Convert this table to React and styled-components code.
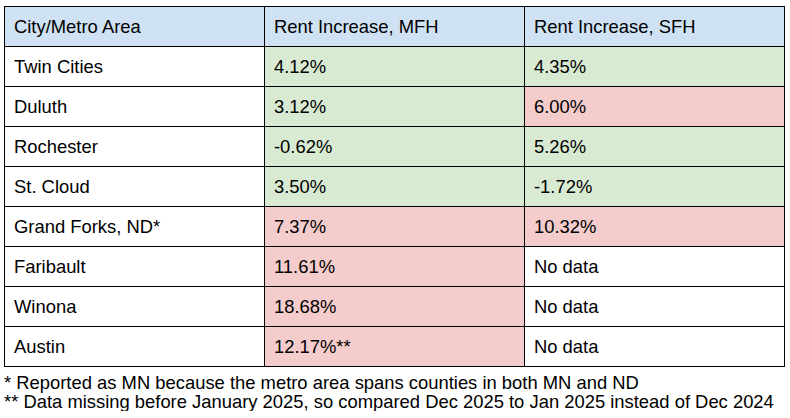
import React from 'react';
import styled, { createGlobalStyle } from 'styled-components';

const GlobalStyle = createGlobalStyle`
  body {
    margin: 0;
    background: #ffffff;
    font-family: "Liberation Sans", Arial, sans-serif;
    color: #000000;
  }
`;

const Page = styled.div`
  padding: 6px 5px 0 4px;
`;

const Table = styled.table`
  border-collapse: collapse;
  width: 781px;
  table-layout: fixed;
  font-size: 18.4px;
`;

const fills = {
  head: '#cfe2f3',
  good: '#d9ead3',
  bad: '#f4cccc',
  none: '#ffffff',
};

const Cell = styled.td`
  border: 1px solid #000000;
  height: 40px;
  padding: 0 0 0 9px;
  box-sizing: border-box;
  text-align: left;
  vertical-align: middle;
  font-weight: normal;
  background: ${(p) => fills[p.$fill || 'none']};
`;

const Notes = styled.div`
  margin-top: 6px;
  font-size: 18.4px;
  line-height: 19px;
`;

const Note = styled.div`
  white-space: nowrap;
`;

const rows = [
  ['Twin Cities', '4.12%', 'good', '4.35%', 'good'],
  ['Duluth', '3.12%', 'good', '6.00%', 'bad'],
  ['Rochester', '-0.62%', 'good', '5.26%', 'good'],
  ['St. Cloud', '3.50%', 'good', '-1.72%', 'good'],
  ['Grand Forks, ND*', '7.37%', 'bad', '10.32%', 'bad'],
  ['Faribault', '11.61%', 'bad', 'No data', 'none'],
  ['Winona', '18.68%', 'bad', 'No data', 'none'],
  ['Austin', '12.17%**', 'bad', 'No data', 'none'],
];

export default function App() {
  return (
    <Page>
      <GlobalStyle />
      <Table>
        <thead>
          <tr>
            <Cell as="th" $fill="head">City/Metro Area</Cell>
            <Cell as="th" $fill="head">Rent Increase, MFH</Cell>
            <Cell as="th" $fill="head">Rent Increase, SFH</Cell>
          </tr>
        </thead>
        <tbody>
          {rows.map(([city, mfh, mfhFill, sfh, sfhFill]) => (
            <tr key={city}>
              <Cell>{city}</Cell>
              <Cell $fill={mfhFill}>{mfh}</Cell>
              <Cell $fill={sfhFill}>{sfh}</Cell>
            </tr>
          ))}
        </tbody>
      </Table>
      <Notes>
        <Note>* Reported as MN because the metro area spans counties in both MN and ND</Note>
        <Note>** Data missing before January 2025, so compared Dec 2025 to Jan 2025 instead of Dec 2024</Note>
      </Notes>
    </Page>
  );
}
